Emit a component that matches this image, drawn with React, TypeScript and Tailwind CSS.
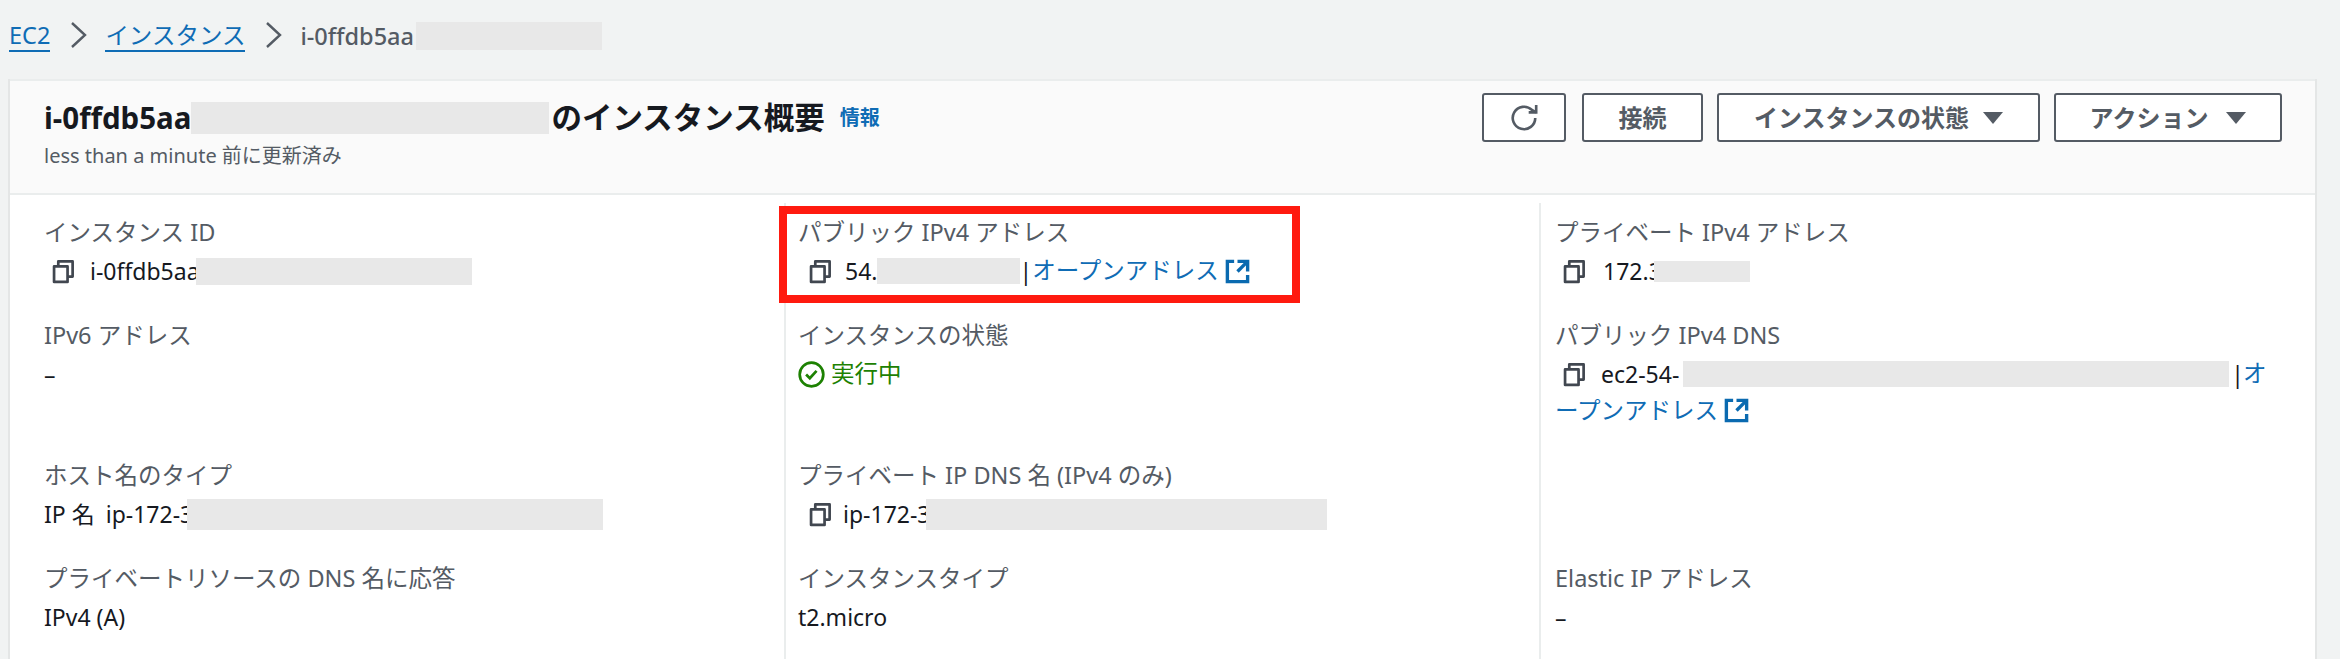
import type { ReactNode } from "react";

const sans = "font-['Noto_Sans','Noto_Sans_CJK_JP',sans-serif]";

function Redact({ className }: { className: string }) {
  return <span className={`inline-block shrink-0 bg-[#e8e8e8] ${className}`} />;
}

function CopyIcon({ className = "" }: { className?: string }) {
  return (
    <svg viewBox="0 0 16 16" fill="none" stroke="#414750" strokeWidth="1.6" className={`h-[27px] w-[27px] shrink-0 ${className}`}>
      <path d="M3 5h8v9.2H3z" strokeLinejoin="round" />
      <path d="M5.5 5V2H14v9h-3" strokeLinejoin="round" />
    </svg>
  );
}

function ExternalIcon({ className = "" }: { className?: string }) {
  return (
    <svg viewBox="0 0 16 16" fill="none" stroke="#0a6ab0" strokeWidth="2" className={`inline-block h-[27px] w-[27px] shrink-0 ${className}`}>
      <path d="M14 8V2H8" />
      <path d="M14 2 8 8" />
      <path d="M6 2H2v12h12v-4" />
    </svg>
  );
}

function Chevron() {
  return (
    <svg viewBox="0 0 18 30" fill="none" stroke="#545b64" strokeWidth="2.4" className="h-[30px] w-[18px]">
      <path d="m2 3 13 12L2 27" />
    </svg>
  );
}

function Caret() {
  return (
    <svg viewBox="0 0 20 12" className="h-[12px] w-[20px]" fill="#545b64">
      <path d="M0 0h20L10 12z" />
    </svg>
  );
}

function ActionButton({ className, children }: { className: string; children: ReactNode }) {
  return (
    <button className={`flex h-[49px] items-center justify-center rounded-[3px] border-2 border-[#545b64] bg-white text-[24px] font-semibold text-[#545b64] ${className}`}>
      {children}
    </button>
  );
}

function Field({ label, children, className = "" }: { label: string; children: ReactNode; className?: string }) {
  return (
    <div className={`pt-[13px] ${className}`}>
      <div className="text-[23.5px] leading-[32px] text-[#545b64]">{label}</div>
      <div className="mt-[7px] flex h-[32px] items-center text-[23px] text-[#16191f]">{children}</div>
    </div>
  );
}

const col1 = "pl-[34px]";
const col2 = "border-l-2 border-[#eaeded] pl-[12px]";
const col3 = "border-l-2 border-[#eaeded] pl-[14px]";

export default function App() {
  return (
    <div className={`relative h-[659px] w-[2340px] overflow-hidden bg-[#f1f3f3] ${sans}`}>
      {/* Breadcrumb */}
      <nav className="flex h-[79px] items-start gap-[20px] pl-[9px] pt-[20px] text-[23.5px] leading-[32px]">
        <a className="border-b-2 border-[#0f6cb5] leading-[30px] text-[#0f6cb5]">EC2</a>
        <Chevron />
        <a className="-ml-[3px] border-b-2 border-[#0f6cb5] leading-[30px] text-[#0f6cb5]">インスタンス</a>
        <Chevron />
        <div className="-ml-[3px] flex items-center text-[#545b64]">
          <span className="font-medium">i-0ffdb5aa</span>
          <Redact className="ml-[2px] h-[28px] w-[186px]" />
        </div>
      </nav>

      {/* Summary panel */}
      <section className="ml-[8px] mr-[23px] h-[580px] border-l-2 border-r-2 border-[#e4e6e6] bg-white">
        <header className="flex h-[116px] items-start justify-between border-b-2 border-t-2 border-[#eaeded] bg-[#fafafa] pl-[34px] pr-[33px]">
          <div className="pt-[20px]">
            <div className="flex h-[34px] items-center text-[29.5px] font-bold text-[#16191f]">
              <span>i-0ffdb5aa</span>
              <Redact className="h-[32px] w-[358px]" />
              <span className="ml-[2px] text-[30.5px]">のインスタンス概要</span>
              <a className="ml-[15px] text-[20px] font-bold text-[#0f6cb5]">情報</a>
            </div>
            <div className="mt-[7px] text-[20px] leading-[28px] text-[#545b64]">less than a minute 前に更新済み</div>
          </div>
          <div className="flex gap-[14px] pt-[12px]">
            <ActionButton className="mr-[2px] w-[84px]">
              <svg viewBox="0 0 16 16" fill="none" stroke="#545b64" strokeWidth="1.4" className="h-[30px] w-[30px]">
                <path d="M10.5 5h4V1" />
                <path d="M14 8a6 6 0 1 1-1.8-4.3L14.5 5" />
              </svg>
            </ActionButton>
            <ActionButton className="w-[121px]">接続</ActionButton>
            <ActionButton className="w-[323px] gap-[14px]">
              インスタンスの状態
              <Caret />
            </ActionButton>
            <ActionButton className="w-[228px] gap-[18px]">
              アクション
              <Caret />
            </ActionButton>
          </div>
        </header>

        <div className="grid h-[464px] grid-cols-[774px_755px_1fr] grid-rows-[103px_140px_103px_1fr] pt-[8px]">
          <Field label="インスタンス ID" className={col1}>
            <CopyIcon className="ml-[5px]" />
            <span className="ml-[14px]">i-0ffdb5aa</span>
            <Redact className="-ml-[4px] h-[27px] w-[276px]" />
          </Field>
          <Field label="パブリック IPv4 アドレス" className={col2}>
            <CopyIcon className="ml-[8px]" />
            <span className="ml-[12px]">54.</span>
            <Redact className="h-[26px] w-[143px]" />
            <span className="-ml-[1px]">|</span>
            <a className="text-[23.5px] text-[#0f6cb5]">オープンアドレス</a>
            <ExternalIcon className="ml-[5px]" />
          </Field>
          <Field label="プライベート IPv4 アドレス" className={col3}>
            <CopyIcon className="ml-[5px]" />
            <span className="ml-[16px]">172.3</span>
            <Redact className="-ml-[8px] h-[21px] w-[96px]" />
          </Field>

          <Field label="IPv6 アドレス" className={col1}>–</Field>
          <Field label="インスタンスの状態" className={col2}>
            <svg viewBox="0 0 16 16" fill="none" stroke="#1d8102" strokeWidth="1.6" className="h-[27px] w-[27px] shrink-0">
              <circle cx="8" cy="8" r="7" />
              <path d="m4.8 8 2.2 2.2L11 5.8" />
            </svg>
            <span className="ml-[6px] text-[23.5px] text-[#1d8102]">実行中</span>
          </Field>
          <div className={`pt-[13px] ${col3}`}>
            <div className="text-[23.5px] leading-[32px] text-[#545b64]">パブリック IPv4 DNS</div>
            <div className="mt-[6px] flex h-[34px] items-center text-[23px] text-[#16191f]">
              <CopyIcon className="ml-[5px]" />
              <span className="ml-[14px]">ec2-54-</span>
              <Redact className="ml-[4px] h-[26px] w-[546px]" />
              <span className="ml-[2px]">|</span>
              <a className="-ml-[1px] text-[23.5px] text-[#0f6cb5]">オ</a>
            </div>
            <a className="mt-[3px] flex items-center text-[23.5px] leading-[32px] text-[#0f6cb5]">
              ープンアドレス
              <ExternalIcon className="ml-[5px]" />
            </a>
          </div>

          <Field label="ホスト名のタイプ" className={col1}>
            <span>IP 名</span>
            <span className="ml-[11px]">ip-172-3</span>
            <Redact className="-ml-[6px] h-[31px] w-[416px]" />
          </Field>
          <Field label="プライベート IP DNS 名 (IPv4 のみ)" className={col2}>
            <CopyIcon className="ml-[8px]" />
            <span className="ml-[10px]">ip-172-3</span>
            <Redact className="-ml-[5px] h-[31px] w-[401px]" />
          </Field>
          <div className={col3} />

          <Field label="プライベートリソースの DNS 名に応答" className={col1}>IPv4 (A)</Field>
          <Field label="インスタンスタイプ" className={col2}>t2.micro</Field>
          <Field label="Elastic IP アドレス" className={col3}>–</Field>
        </div>
      </section>

      {/* Highlight annotation */}
      <div className="absolute left-[779px] top-[206px] h-[97px] w-[521px] border-[8px] border-[#ff1a0f]" />
    </div>
  );
}
